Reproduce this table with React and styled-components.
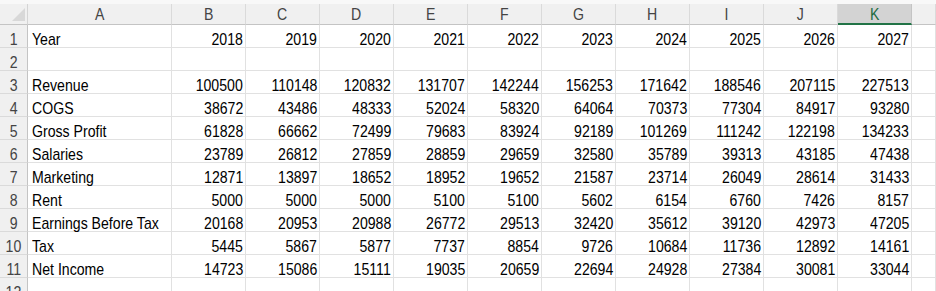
import React from "react";
import styled, { createGlobalStyle } from "styled-components";

const Global = createGlobalStyle`
  html, body { margin: 0; padding: 0; background: #ffffff; overflow: hidden; }
  body { font-family: "Liberation Sans", Arial, sans-serif; }
`;

const Sheet = styled.div`
  width: 936px;
  height: 291px;
  overflow: hidden;
  padding-top: 4px;
  background-color: #fff;
  background-image: linear-gradient(#f8f8f8, #f8f8f8);
  background-size: 100% 4px;
  background-repeat: no-repeat;
  box-sizing: border-box;
`;

const Grid = styled.div`
  display: grid;
  grid-template-columns: 28px 144px repeat(10, 74px) 1fr;
  grid-template-rows: 21px repeat(12, 23px);
  font-size: 17px;
  color: #000;
`;

const Corner = styled.div`
  position: relative;
  background: #f0f0f0;
  border-right: 1px solid #d4d4d4;
  border-bottom: 1px solid #c4c4c4;
  box-sizing: border-box;
`;

const Triangle = styled.svg`
  position: absolute;
  right: 2px;
  bottom: 3px;
`;

const Narrow = styled.span`
  display: inline-block;
  white-space: nowrap;
  transform: scaleX(0.83);
  transform-origin: ${(p) => p.$origin || "center"};
`;

const ColHead = styled.div`
  background: ${(p) => (p.$selected ? "#d3d3d3" : "#f0f0f0")};
  color: ${(p) => (p.$selected ? "#1d6b3f" : "#444")};
  border-right: 1px solid ${(p) => (p.$selected ? "#c4c4c4" : "#dadada")};
  border-bottom: ${(p) => (p.$selected ? "2px solid #217346" : "1px solid #c4c4c4")};
  box-sizing: border-box;
  display: flex;
  align-items: flex-start;
  justify-content: center;
  line-height: 17px;
  padding-top: 2px;
`;

const RowHead = styled.div`
  background: #f0f0f0;
  color: #444;
  border-right: 1px solid #c4c4c4;
  border-bottom: 1px solid #dadada;
  box-sizing: border-box;
  display: flex;
  align-items: flex-start;
  justify-content: center;
  padding-top: 6px;
  line-height: 17px;
`;

const Cell = styled.div`
  border-right: 1px solid #e1e1e1;
  border-bottom: 1px solid #e1e1e1;
  box-sizing: border-box;
  display: flex;
  align-items: flex-start;
  justify-content: ${(p) => (p.$num ? "flex-end" : "flex-start")};
  padding: 6px ${(p) => (p.$num ? "2px" : "0")} 0 ${(p) => (p.$num ? "0" : "4px")};
  white-space: nowrap;
  line-height: 17px;
  min-width: 0;
`;

const cols = ["A", "B", "C", "D", "E", "F", "G", "H", "I", "J", "K", ""];

const rows = [
  ["Year", 2018, 2019, 2020, 2021, 2022, 2023, 2024, 2025, 2026, 2027],
  [],
  ["Revenue", 100500, 110148, 120832, 131707, 142244, 156253, 171642, 188546, 207115, 227513],
  ["COGS", 38672, 43486, 48333, 52024, 58320, 64064, 70373, 77304, 84917, 93280],
  ["Gross Profit", 61828, 66662, 72499, 79683, 83924, 92189, 101269, 111242, 122198, 134233],
  ["Salaries", 23789, 26812, 27859, 28859, 29659, 32580, 35789, 39313, 43185, 47438],
  ["Marketing", 12871, 13897, 18652, 18952, 19652, 21587, 23714, 26049, 28614, 31433],
  ["Rent", 5000, 5000, 5000, 5100, 5100, 5602, 6154, 6760, 7426, 8157],
  ["Earnings Before Tax", 20168, 20953, 20988, 26772, 29513, 32420, 35612, 39120, 42973, 47205],
  ["Tax", 5445, 5867, 5877, 7737, 8854, 9726, 10684, 11736, 12892, 14161],
  ["Net Income", 14723, 15086, 15111, 19035, 20659, 22694, 24928, 27384, 30081, 33044],
  [],
];

export default function App() {
  return (
    <>
      <Global />
      <Sheet>
        <Grid>
          <Corner>
            <Triangle width="13" height="13" viewBox="0 0 13 13">
              <polygon points="13,0 13,13 0,13" fill="#d8d8d8" />
            </Triangle>
          </Corner>
          {cols.map((c, i) => (
            <ColHead key={i} $selected={c === "K"}>
              <Narrow>{c}</Narrow>
            </ColHead>
          ))}
          {rows.map((r, ri) => (
            <React.Fragment key={ri}>
              <RowHead>
                <Narrow>{ri + 1}</Narrow>
              </RowHead>
              {Array.from({ length: 12 }).map((_, ci) => {
                const v = r[ci];
                const num = typeof v === "number";
                return (
                  <Cell key={ci} $num={num}>
                    {v !== undefined ? (
                      <Narrow $origin={num ? "right" : "left"}>{v}</Narrow>
                    ) : null}
                  </Cell>
                );
              })}
            </React.Fragment>
          ))}
        </Grid>
      </Sheet>
    </>
  );
}
